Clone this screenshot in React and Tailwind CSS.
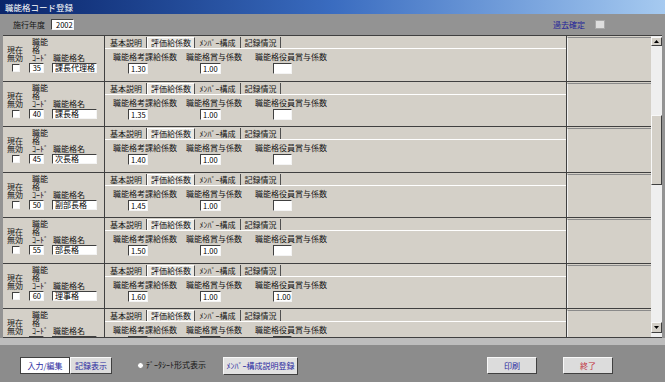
import React from 'react';

const rows = [
  { code: '35', name: '課長代理格', a: '1.30', b: '1.00', c: '' },
  { code: '40', name: '課長格', a: '1.35', b: '1.00', c: '' },
  { code: '45', name: '次長格', a: '1.40', b: '1.00', c: '' },
  { code: '50', name: '副部長格', a: '1.45', b: '1.00', c: '' },
  { code: '55', name: '部長格', a: '1.50', b: '1.00', c: '' },
  { code: '60', name: '理事格', a: '1.60', b: '1.00', c: '1.00' },
  { code: '', name: '', a: '', b: '', c: '' },
];

const tabs = [
  { label: '基本説明', w: 'w-[41px]' },
  { label: '評価給係数', w: 'w-[48px]', active: true },
  { label: 'ﾒﾝﾊﾞｰ構成', w: 'w-[46px]' },
  { label: '記録情況', w: 'w-[40px]' },
];

const sunken = 'border border-t-[#404040] border-l-[#404040] border-b-[#f4f4f4] border-r-[#f4f4f4] bg-white';
const raised = 'border border-t-[#f8f8f8] border-l-[#f8f8f8] border-b-[#404040] border-r-[#404040]';

function Field({ className, children, right }) {
  return (
    <div className={`${sunken} flex shrink-0 items-center overflow-hidden whitespace-nowrap text-[7.5px] leading-none text-black ${right ? 'justify-end pr-[2px]' : 'pl-[2px]'} ${className}`}>
      {children}
    </div>
  );
}

function Arrow({ down }) {
  return (
    <svg width="5" height="3" viewBox="0 0 5 3">
      <polygon points={down ? '0,0 5,0 2.5,3' : '0,3 5,3 2.5,0'} fill="#000" />
    </svg>
  );
}

function Row({ r, tall }) {
  return (
    <div className={`flex shrink-0 border-b border-[#404040] bg-[#d4d0c8] ${tall ? 'h-[46px]' : 'h-[45px]'}`}>
      {/* left: flags, code, name */}
      <div className="flex w-[102px] shrink-0 border-r border-[#404040] text-[8px] leading-[8px] text-[#141414]">
        <div className="ml-[4px] flex w-[22px] shrink-0 flex-col pt-[10px]">
          <span className="whitespace-pre-line">{'現在\n無効'}</span>
          <div className={`${sunken} ml-[5px] mt-[2px] h-[8px] w-[8px]`} />
        </div>
        <div className="flex w-[20px] shrink-0 flex-col pt-[2px]">
          <span className="whitespace-pre-line pl-[3px]">{'職能\n格\nｺｰﾄﾞ'}</span>
          <Field right className="mt-[1px] h-[10px] w-[15px]">{r.code}</Field>
        </div>
        <div className="flex shrink-0 flex-col whitespace-nowrap pt-[18px]">
          <span className="pl-[4px]">職能格名</span>
          <Field className="ml-[3px] mt-[1px] h-[10px] w-[45px] text-[8px]">{r.name}</Field>
        </div>
      </div>

      {/* tab control */}
      <div className="flex w-[462px] shrink-0 flex-col border-r border-[#404040]">
        <div className="flex h-[12px] pl-[1px] pt-[1px] text-[8px] leading-none text-[#141414]">
          {tabs.map((t) => (
            <div
              key={t.label}
              className={`flex items-center justify-center whitespace-nowrap border-r border-[#505050] ${t.w} ${
                t.active ? 'border-l border-t border-l-white border-t-white bg-[#ebe9e4]' : ''
              }`}
            >
              {t.label}
            </div>
          ))}
        </div>
        <div className="flex flex-1 border-t border-t-white pl-[8px] pt-[4px] text-[8px] leading-[8px] text-[#141414]">
          <div className="flex w-[73px] shrink-0 flex-col">
            <span className="whitespace-nowrap">職能格考課給係数</span>
            <Field className="ml-[15px] mt-[2px] h-[11px] w-[20px]">{r.a}</Field>
          </div>
          <div className="flex w-[69px] shrink-0 flex-col">
            <span className="whitespace-nowrap">職能格賞与係数</span>
            <Field className="ml-[14px] mt-[2px] h-[11px] w-[21px]">{r.b}</Field>
          </div>
          <div className="flex shrink-0 flex-col">
            <span className="whitespace-nowrap">職能格役員賞与係数</span>
            <Field className="ml-[18px] mt-[2px] h-[11px] w-[19px]">{r.c}</Field>
          </div>
        </div>
      </div>

      {/* empty right area */}
      <div className="mt-[1px] flex-1 border-l border-t border-l-[#f0f0f0] border-t-[#8a8a8a]" />
    </div>
  );
}

export default function App() {
  return (
    <div className="flex h-[382px] w-[665px] flex-col overflow-hidden bg-[#939393] font-['Noto_Sans_CJK_JP',sans-serif]">
      {/* title bar */}
      <div className="flex h-[14px] shrink-0 items-center bg-linear-to-r from-[#0a246a] via-[#3a6cc0] to-[#a6caf0] pl-[5px] text-[8.5px] leading-none text-white">
        職能格コード登録
      </div>

      <div className="flex flex-col px-[3px]">
        {/* header */}
        <div className="flex h-[21px] items-center text-[8px] leading-none">
          <span className="ml-[10px] text-[#141414]">施行年度</span>
          <Field className="ml-[6px] h-[11px] w-[23px] pl-[4px]">2002</Field>
          <span className="ml-auto text-[#22229a]">過去確定</span>
          <div className="ml-[10px] h-[9px] w-[10px] border border-[#a8a8a8] bg-[#dedede]" />
          <div className="w-[57px]" />
        </div>

        {/* record list */}
        <div className="flex border-b border-t border-[#404040]">
          <div className="flex h-[301px] w-[648px] flex-col overflow-hidden">
            {rows.map((r, i) => (
              <Row key={i} r={r} tall={i % 2 === 0} />
            ))}
          </div>
          <div className="flex h-[301px] w-[11px] flex-col bg-[#efefef]">
            <div className={`${raised} mt-[1px] flex h-[9px] items-center justify-center bg-[#d4d0c8]`}>
              <Arrow />
            </div>
            <div className={`${raised} mt-[69px] h-[70px] bg-[#d4d0c8]`} />
            <div className={`${raised} mb-[4px] mt-auto flex h-[11px] items-center justify-center bg-[#d4d0c8]`}>
              <Arrow down />
            </div>
          </div>
        </div>
      </div>

      {/* footer */}
      <div className="h-[7px] shrink-0 bg-[#bdbdbd]" />
      <div className="flex flex-1 items-start bg-[#8c8c8c] pt-[12px] text-[8px] leading-none">
        <div className="ml-[20px] flex h-[17px]">
          <div className="flex w-[50px] items-center justify-center border border-[#404040] bg-white text-[#2a2aa0]">
            入力/編集
          </div>
          <div className={`${raised} flex w-[42px] items-center justify-center bg-[#dcdcdc] text-[#2a2aa0]`}>
            記録表示
          </div>
        </div>
        <div className="ml-[25px] mt-[5px] h-[7px] w-[7px] rounded-full border border-[#808080] bg-white" />
        <span className="ml-[2px] mt-[4px] whitespace-nowrap text-[#141414]">ﾃﾞｰﾀｼｰﾄ形式表示</span>
        <div className={`${raised} ml-[17px] flex h-[18px] w-[75px] items-center justify-center whitespace-nowrap bg-[#e2e2e2] text-[#2a2aa0]`}>
          ﾒﾝﾊﾞｰ構成説明登録
        </div>
        <div className={`${raised} ml-auto flex h-[17px] w-[50px] items-center justify-center bg-[#dcdcdc] text-[#2a2aa0]`}>
          印刷
        </div>
        <div className={`${raised} ml-[26px] mr-[52px] flex h-[17px] w-[50px] items-center justify-center bg-[#dcdcdc] text-[#c03040]`}>
          終了
        </div>
      </div>
    </div>
  );
}
